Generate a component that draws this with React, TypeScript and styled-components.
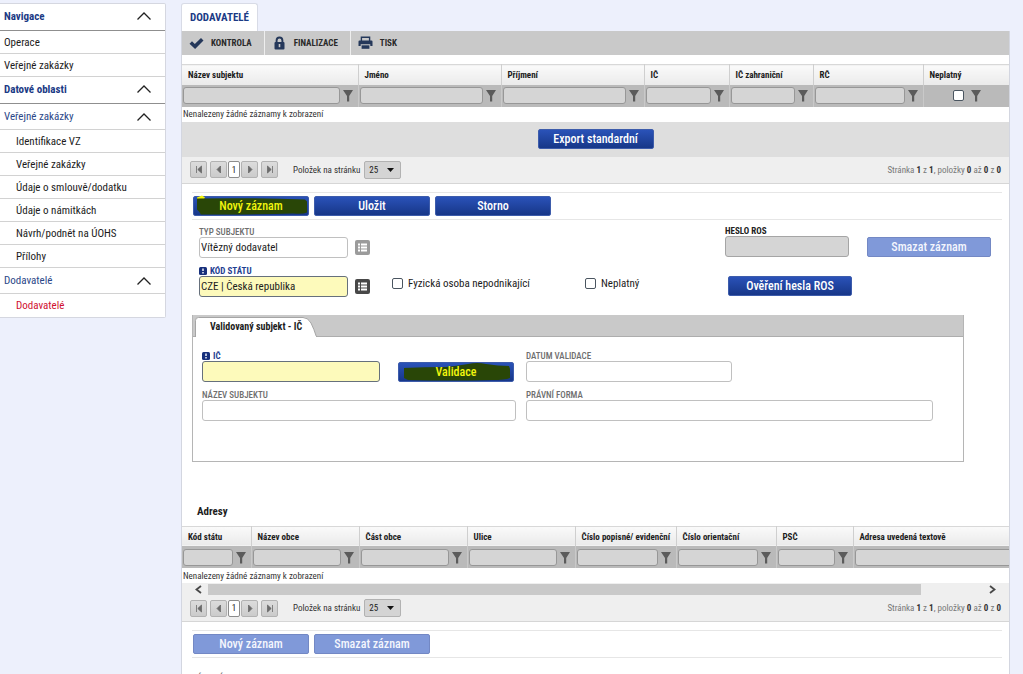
import React, { ReactNode } from "react";
import styled, { createGlobalStyle, css } from "styled-components";

const Global = createGlobalStyle`
  * { box-sizing: border-box; }
  body {
    margin: 0;
    background: #edf0fc;
    color: #1c1c1c;
    font-family: "Roboto Condensed", "Liberation Sans Narrow", Roboto, sans-serif;
    font-size: 11px;
  }
  button, input, select { font: inherit; margin: 0; }
`;

const Page = styled.div`
  display: flex;
  align-items: flex-start;
  gap: 15px;
  height: 100vh;
  padding: 3px 13px 0 0;
  overflow: hidden;
`;

/* ---------- sidebar ---------- */

const Sidebar = styled.nav`
  flex: 0 0 166px;
  background: #fff;
  border: 1px solid #d5d7e0;
  border-left: 0;
  border-radius: 0 2px 2px 0;
`;

type NavKind = "title" | "link" | "group" | "child";

const navKinds = {
  title: css`
    height: 27px;
    padding-bottom: 2px;
    color: #1b3a85;
    font-weight: 700;
    border-bottom-color: #8f8f8f;
  `,
  link: css`
    height: 23px;
  `,
  group: css`
    height: 26px;
    color: #2b4788;
  `,
  child: css`
    height: 23px;
    padding-left: 16px;
  `,
};

const NavItem = styled.a<{ $kind: NavKind; $active?: boolean }>`
  display: flex;
  align-items: center;
  justify-content: space-between;
  padding: 0 13px 0 4px;
  color: #1c1c1c;
  text-decoration: none;
  border-bottom: 1px solid #d2d2d2;
  ${(p) => navKinds[p.$kind]}
  ${(p) => p.$active && "color: #d01030;"}
  &:last-child { border-bottom: 0; }
`;

const navItems: { kind: NavKind; text: string; active?: boolean }[] = [
  { kind: "title", text: "Navigace" },
  { kind: "link", text: "Operace" },
  { kind: "link", text: "Veřejné zakázky" },
  { kind: "title", text: "Datové oblasti" },
  { kind: "group", text: "Veřejné zakázky" },
  { kind: "child", text: "Identifikace VZ" },
  { kind: "child", text: "Veřejné zakázky" },
  { kind: "child", text: "Údaje o smlouvě/dodatku" },
  { kind: "child", text: "Údaje o námitkách" },
  { kind: "child", text: "Návrh/podnět na ÚOHS" },
  { kind: "child", text: "Přílohy" },
  { kind: "group", text: "Dodavatelé" },
  { kind: "child", text: "Dodavatelé", active: true },
];

const Chevron = () => (
  <svg width="16" height="10" viewBox="0 0 16 10" fill="none" stroke="#222" strokeWidth="1.3">
    <path d="M1.5 8.5 8 2l6.5 6.5" />
  </svg>
);

/* ---------- main column ---------- */

const Main = styled.main`
  flex: 1;
  min-width: 0;
`;

const PageTab = styled.h1`
  display: inline-flex;
  align-items: center;
  height: 28px;
  margin: 0;
  padding: 0 8px;
  background: #fff;
  border: 1px solid #d8dbe6;
  border-bottom: 0;
  border-radius: 3px 3px 0 0;
  color: #1b3a85;
  font-size: 11px;
  font-weight: 700;
  vertical-align: top;
`;

const Sheet = styled.div`
  background: #fff;
  border: solid #d3d6e0;
  border-width: 0 1px;
  min-height: 700px;
`;

const Toolbar = styled.div`
  display: flex;
  height: 24px;
  margin-bottom: 9px;
  background: #c9c9c9;
`;

const Tool = styled.button`
  display: flex;
  align-items: center;
  gap: 7px;
  padding: 0 12px 0 7px;
  background: none;
  border: 0;
  border-right: 1px solid #eee;
  color: #2a2a2a;
  font-size: 9px;
  font-weight: 700;
  &:last-child { border-right: 0; }
`;

const CheckIcon = () => (
  <svg width="15" height="13" viewBox="0 0 15 13">
    <path d="M.5 6.800 3 4.300 5.800 6.900 12 1l2.500 2.500L6.100 12z" fill="#25385a" />
  </svg>
);
const LockIcon = () => (
  <svg width="15" height="14" viewBox="0 0 15 14">
    <path d="M4.600 6.500V4.400a2.900 2.900 0 0 1 5.800 0v2.100" fill="none" stroke="#25385a" strokeWidth="1.900" />
    <rect x="2.500" y="6" width="10" height="7.500" rx="1" fill="#25385a" />
    <path d="M7.500 8v3.200" stroke="#c9c9c9" strokeWidth="1.600" />
  </svg>
);
const PrintIcon = () => (
  <svg width="15" height="14" viewBox="0 0 15 14">
    <path d="M3.400 5V1.200h8.200V5" fill="none" stroke="#25385a" strokeWidth="1.400" />
    <path d="M1.500 4.500h12a1 1 0 0 1 1 1V10h-2.200V8.200H2.700V10H.5V5.500a1 1 0 0 1 1-1z" fill="#25385a" />
    <path d="M3.600 9.300h7.800v3.500H3.600z" fill="#25385a" />
  </svg>
);

/* ---------- grids ---------- */

const TableWrap = styled.div`
  overflow: hidden;
`;

const Table = styled.table<{ $min?: number }>`
  width: 100%;
  min-width: ${(p) => p.$min ?? 0}px;
  table-layout: fixed;
  border-collapse: collapse;
`;

const Col = styled.col<{ $w: number }>`
  width: ${(p) => p.$w}px;
`;

const HeadCell = styled.th`
  height: 20px;
  padding: 1px 4px 0 6px;
  background: linear-gradient(#fafafa, #eaeaea);
  border-top: 1px solid #d8d8d8;
  border-right: 1px solid #cfcfcf;
  color: #1c1c1c;
  font-size: 9px;
  font-weight: 700;
  line-height: 12px;
  text-align: left;
  white-space: nowrap;
`;

const FilterCell = styled.td`
  height: 22px;
  padding: 0 4px 0 1px;
  background: #bababa;
  border-right: 1px solid #c9c9c9;
`;

const FilterBox = styled.div<{ $center?: boolean }>`
  display: flex;
  align-items: center;
  justify-content: ${(p) => (p.$center ? "center" : "flex-start")};
  gap: ${(p) => (p.$center ? 6 : 2)}px;
  padding-left: ${(p) => (p.$center ? 5 : 0)}px;
`;

const FilterInput = styled.input`
  flex: 1;
  min-width: 0;
  height: 17px;
  padding: 0 4px;
  background: #d5d5d5;
  border: 1px solid #979797;
  border-radius: 3px;
`;

const Tick = styled.input`
  appearance: none;
  flex: none;
  width: 11px;
  height: 11px;
  background: #fff;
  border: 1px solid #4a5560;
  border-radius: 2px;
`;

const IconButton = styled.button`
  display: flex;
  padding: 0;
  background: none;
  border: 0;
`;

const EmptyCell = styled.td`
  height: 15px;
  padding: 0 1px;
  color: #333;
  font-size: 9px;
  line-height: 14px;
`;

const Funnel = () => (
  <svg width="12" height="13" viewBox="0 0 12 13">
    <path d="M1 1h10L7.200 7v5.500H5V7z" fill="#5b5b5b" />
  </svg>
);

type Column = { name: string; w: number; check?: boolean };

function DataGrid({ columns, min, label }: { columns: Column[]; min?: number; label: string }) {
  return (
    <TableWrap>
      <Table $min={min} aria-label={label}>
        <colgroup>
          {columns.map((c) => (
            <Col key={c.name} $w={c.w} />
          ))}
        </colgroup>
        <thead>
          <tr>
            {columns.map((c) => (
              <HeadCell key={c.name}>{c.name}</HeadCell>
            ))}
          </tr>
        </thead>
        <tbody>
          <tr>
            {columns.map((c) => (
              <FilterCell key={c.name}>
                <FilterBox $center={c.check}>
                  {c.check ? (
                    <Tick type="checkbox" aria-label={c.name} />
                  ) : (
                    <FilterInput aria-label={c.name} />
                  )}
                  <IconButton aria-label={"Filtr " + c.name}>
                    <Funnel />
                  </IconButton>
                </FilterBox>
              </FilterCell>
            ))}
          </tr>
          <tr>
            <EmptyCell colSpan={columns.length}>Nenalezeny žádné záznamy k zobrazení</EmptyCell>
          </tr>
        </tbody>
      </Table>
    </TableWrap>
  );
}

const supplierColumns: Column[] = [
  { name: "Název subjektu", w: 176 },
  { name: "Jméno", w: 143 },
  { name: "Příjmení", w: 143 },
  { name: "IČ", w: 85 },
  { name: "IČ zahraniční", w: 84 },
  { name: "RČ", w: 110 },
  { name: "Neplatný", w: 86, check: true },
];

const addressColumns: Column[] = [
  { name: "Kód státu", w: 69 },
  { name: "Název obce", w: 108 },
  { name: "Část obce", w: 108 },
  { name: "Ulice", w: 108 },
  { name: "Číslo popisné/ evidenční", w: 101 },
  { name: "Číslo orientační", w: 100 },
  { name: "PSČ", w: 77 },
  { name: "Adresa uvedená textově", w: 241 },
];

const ExportBar = styled.div`
  display: flex;
  align-items: center;
  justify-content: center;
  height: 35px;
  background: #dedede;
`;

/* ---------- pager ---------- */

const PagerBar = styled.div`
  display: flex;
  align-items: center;
  height: 27px;
  padding: 0 8px;
  background: #efefef;
  border-bottom: 1px solid #d6d6d6;
  color: #333;
  font-size: 9px;
`;

const PageButtons = styled.div`
  display: flex;
  gap: 3px;
  margin-right: 15px;
`;

const PageStep = styled.div`
  display: flex;
  gap: 1px;
`;

const PageButton = styled.button<{ $current?: boolean }>`
  display: flex;
  align-items: center;
  justify-content: center;
  width: ${(p) => (p.$current ? 12 : 17)}px;
  height: 17px;
  padding: 0;
  background: ${(p) => (p.$current ? "#fff" : "linear-gradient(#dcdcdc, #cbcbcb)")};
  border: 1px solid ${(p) => (p.$current ? "#8c8c8c" : "#b2b2b2")};
  border-radius: 2px;
  color: #222;
`;

const SizeLabel = styled.label`
  display: flex;
  align-items: center;
  gap: 4px;
`;

const SelectWrap = styled.span`
  position: relative;
  display: inline-flex;
`;

const SizeSelect = styled.select`
  appearance: none;
  width: 37px;
  height: 18px;
  padding: 0 4px;
  background: #d4d4d4;
  border: 1px solid #b2b2b2;
  border-radius: 2px;
  color: #222;
`;

const SelectArrow = styled.svg`
  position: absolute;
  top: 7px;
  right: 7px;
  pointer-events: none;
`;

const Summary = styled.span`
  margin-left: auto;
  color: #777;
  b { color: #333; }
`;

const arrows = {
  first: "M2.500 1v7M7.500 1v7L3.800 4.500z",
  prev: "M6.500 1v7L3 4.500z",
  next: "M3.500 1v7L7 4.500z",
  last: "M7.500 1v7M2.500 1v7l3.700-3.500z",
};

function Arrow({ kind }: { kind: keyof typeof arrows }) {
  return (
    <svg width="10" height="9" viewBox="0 0 10 9" fill="#6a6a6a" stroke="#6a6a6a" strokeWidth="0.8">
      <path d={arrows[kind]} />
    </svg>
  );
}

function Pager() {
  return (
    <PagerBar>
      <PageButtons>
        <PageButton aria-label="První"><Arrow kind="first" /></PageButton>
        <PageStep>
          <PageButton aria-label="Předchozí"><Arrow kind="prev" /></PageButton>
          <PageButton $current>1</PageButton>
          <PageButton aria-label="Další"><Arrow kind="next" /></PageButton>
        </PageStep>
        <PageButton aria-label="Poslední"><Arrow kind="last" /></PageButton>
      </PageButtons>
      <SizeLabel>
        Položek na stránku
        <SelectWrap>
          <SizeSelect defaultValue="25">
            <option>25</option>
            <option>50</option>
          </SizeSelect>
          <SelectArrow width="7" height="4" viewBox="0 0 7 4">
            <path d="M0 0h7L3.500 4z" fill="#111" />
          </SelectArrow>
        </SelectWrap>
      </SizeLabel>
      <Summary>
        Stránka <b>1</b> z <b>1</b>, položky <b>0</b> až <b>0</b> z <b>0</b>
      </Summary>
    </PagerBar>
  );
}

/* ---------- buttons ---------- */

const Action = styled.button<{ $wide?: boolean }>`
  position: relative;
  flex: none;
  width: ${(p) => (p.$wide ? 124 : 116)}px;
  height: 20px;
  padding: 0;
  background: linear-gradient(#2a52b8, #173788);
  border: 1px solid #3d5cab;
  border-radius: 2px;
  color: #fff;
  font-size: 12px;
  font-weight: 500;
  line-height: 16px;
  white-space: nowrap;
  &:disabled {
    background: #8099d9;
    border-color: #7388c4;
    color: #f4f6fd;
  }
`;

const Marker = styled.svg`
  position: absolute;
  top: -3px;
  left: 0;
`;

const MarkedText = styled.span`
  position: relative;
  color: #f2f60e;
`;

const ButtonRow = styled.div`
  display: flex;
  gap: 5px;
  margin: 8px 7px 0 10px;
  padding: 3px 1px;
  border: solid #e6e6e6;
  border-width: 1px 0;
`;

/* ---------- form ---------- */

const Form = styled.div`
  display: flex;
  flex-direction: column;
  gap: 8px;
  padding: 6px 18px 0 17px;
`;

const FormRow = styled.div`
  display: flex;
  align-items: flex-end;
`;

const Field = styled.label<{ $w: number }>`
  display: flex;
  flex-direction: column;
  width: ${(p) => p.$w}px;
`;

const Caption = styled.span<{ $tone?: "required" | "dark" }>`
  display: flex;
  align-items: center;
  gap: 3px;
  height: 10px;
  color: ${(p) => (p.$tone === "required" ? "#1f3f92" : p.$tone === "dark" ? "#222" : "#6e6e6e")};
  font-size: 9px;
  font-weight: ${(p) => (p.$tone ? 700 : 500)};
  line-height: 10px;
  white-space: nowrap;
`;

const fieldTones = {
  plain: css`background: #fff; border-color: #c0c0c0;`,
  required: css`background: #fdfabb; border-color: #66707c;`,
  disabled: css`background: #d5d5d5; border-color: #a5a5a5;`,
};

const TextInput = styled.input<{ $tone?: keyof typeof fieldTones }>`
  width: 100%;
  height: 21px;
  padding: 0 1px;
  border: 1px solid;
  border-radius: 3px;
  color: #1c1c1c;
  ${(p) => fieldTones[p.$tone ?? "plain"]}
`;

const ListButton = styled.button<{ $muted?: boolean }>`
  display: flex;
  margin: 0 0 3px 7px;
  padding: 0;
  background: ${(p) => (p.$muted ? "#9b9b9b" : "#484848")};
  border: 0;
  border-radius: 2px;
`;

const ListIcon = () => (
  <svg width="15" height="15" viewBox="0 0 15 15" fill="#fff">
    <path d="M3 3.500h2v2H3zM6 3.500h6v2H6zM3 6.500h2v2H3zM6 6.500h6v2H6zM3 9.500h2v2H3zM6 9.500h6v2H6z" />
  </svg>
);

const RequiredIcon = () => (
  <svg width="8" height="8" viewBox="0 0 8 8">
    <rect width="8" height="8" rx="1.500" fill="#17307c" />
    <path d="M3.300 1.500h1.400v2.600H3.300zM3.300 5h1.400v1.400H3.300z" fill="#fff" />
  </svg>
);

const CheckField = styled.label<{ $w: number }>`
  display: flex;
  align-items: center;
  gap: 5px;
  width: ${(p) => p.$w}px;
  height: 27px;
  white-space: nowrap;
`;

const Checks = styled.div`
  display: flex;
  margin-left: 22px;
`;

const RightGroup = styled.div<{ $end?: boolean }>`
  display: flex;
  align-items: flex-end;
  gap: 18px;
  width: 266px;
  margin-left: auto;
  padding: 0 0 1px ${(p) => (p.$end ? 3 : 0)}px;
`;

/* ---------- validated subject panel ---------- */

const Panel = styled.section`
  margin: 18px 45px 0 10px;
  min-height: 147px;
  border: 1px solid #b5b5b5;
  border-top: 0;
`;

const TabStrip = styled.div`
  display: flex;
  align-items: flex-end;
  height: 22px;
  padding-left: 2px;
  background: #c9c9c9;
  border-bottom: 1px solid #adadad;
`;

const PanelTab = styled.h2`
  position: relative;
  display: flex;
  align-items: center;
  width: 123px;
  height: 20px;
  margin: 0 0 -1px;
  padding: 0 0 0 15px;
  font-size: 10px;
  font-weight: 700;
  span { position: relative; white-space: nowrap; }
`;

const TabShape = styled.svg`
  position: absolute;
  inset: 0;
`;

const PanelGrid = styled.div`
  display: grid;
  grid-template-columns: 314px 407px;
  column-gap: 10px;
  row-gap: 8px;
  padding: 14px 9px 0;
`;

const Split = styled.div`
  display: flex;
  align-items: flex-end;
  justify-content: space-between;
  padding-right: 2px;
`;

const SectionTitle = styled.h2`
  margin: 42px 0 7px 15px;
  font-size: 11px;
  line-height: 15px;
  font-weight: 700;
`;

const ScrollBar = styled.div`
  display: flex;
  align-items: center;
  gap: 5px;
  height: 12px;
  padding: 0 12px;
  background: #efefef;
`;

const ScrollTrack = styled.div`
  flex: 1;
  height: 11px;
`;

const ScrollThumb = styled.div`
  width: 92%;
  height: 100%;
  background: #c9c9c9;
`;

const ScrollArrow = ({ d }: { d: string }) => (
  <svg width="9" height="9" viewBox="0 0 9 9" fill="none" stroke="#484848" strokeWidth="1.800">
    <path d={d} />
  </svg>
);

const NextForm = styled.div`
  padding: 15px 10px;
`;

function Labelled({
  w, text, tone, input, value,
}: {
  w: number;
  text: string;
  tone?: "required" | "dark";
  input?: keyof typeof fieldTones;
  value?: string;
}) {
  const icon: ReactNode = tone === "required" ? <RequiredIcon /> : null;
  return (
    <Field $w={w}>
      <Caption $tone={tone}>{icon}{text}</Caption>
      <TextInput $tone={input} defaultValue={value} />
    </Field>
  );
}

export default function App() {
  return (
    <Page>
      <Global />
      <Sidebar>
        {navItems.map((n, i) => (
          <NavItem key={i} href="#" $kind={n.kind} $active={n.active}>
            {n.text}
            {(n.kind === "title" || n.kind === "group") && <Chevron />}
          </NavItem>
        ))}
      </Sidebar>
      <Main>
        <PageTab>DODAVATELÉ</PageTab>
        <Sheet>
          <Toolbar>
            <Tool><CheckIcon />KONTROLA</Tool>
            <Tool><LockIcon />FINALIZACE</Tool>
            <Tool><PrintIcon />TISK</Tool>
          </Toolbar>
          <DataGrid columns={supplierColumns} label="Dodavatelé" />
          <ExportBar><Action>Export standardní</Action></ExportBar>
          <Pager />

          <ButtonRow>
            <Action>
              <Marker width="115" height="23" viewBox="0 0 115 23">
                <path d="M3 3.500 8 1.500l3 2-2 3H3z" fill="#f4f60c" />
                <path d="M3 4.500q54-1 108 1l2 2v11q-4 2-14 1-40 1-92 1l-2-3-2-2z" fill="#294607" />
              </Marker>
              <MarkedText>Nový záznam</MarkedText>
            </Action>
            <Action>Uložit</Action>
            <Action>Storno</Action>
          </ButtonRow>

          <Form>
            <FormRow>
              <Labelled w={149} text="TYP SUBJEKTU" value="Vítězný dodavatel" />
              <ListButton $muted aria-label="Vybrat typ subjektu"><ListIcon /></ListButton>
              <RightGroup>
                <Labelled w={124} text="HESLO ROS" tone="dark" input="disabled" />
                <Action $wide disabled>Smazat záznam</Action>
              </RightGroup>
            </FormRow>
            <FormRow>
              <Labelled w={149} text="KÓD STÁTU" tone="required" input="required" value="CZE | Česká republika" />
              <ListButton aria-label="Vybrat stát"><ListIcon /></ListButton>
              <Checks>
                <CheckField $w={193}><Tick type="checkbox" />Fyzická osoba nepodnikající</CheckField>
                <CheckField $w={60}><Tick type="checkbox" />Neplatný</CheckField>
              </Checks>
              <RightGroup $end><Action $wide>Ověření hesla ROS</Action></RightGroup>
            </FormRow>
          </Form>

          <Panel>
            <TabStrip>
              <PanelTab>
                <TabShape width="123" height="20" viewBox="0 0 123 20">
                  <path d="M.5 20V3.500a3 3 0 0 1 3-3H108q5 0 8 5.500 3 6 5.500 14z" fill="#fff" stroke="#a5a5a5" />
                  <path d="M1 19.500h120" stroke="#fff" />
                </TabShape>
                <span>Validovaný subjekt - IČ</span>
              </PanelTab>
            </TabStrip>
            <PanelGrid>
              <Split>
                <Labelled w={178} text="IČ" tone="required" input="required" />
                <Action>
                  <Marker width="115" height="23" viewBox="0 0 115 23">
                    <path d="M5 8q20-1 42-1 10-1 22-3 9-2 18 0 12 2 23 2l1 3v9q-5 2-18 2-40 1-84 0l-4-2z" fill="#294607" />
                  </Marker>
                  <MarkedText>Validace</MarkedText>
                </Action>
              </Split>
              <Labelled w={206} text="DATUM VALIDACE" />
              <Labelled w={314} text="NÁZEV SUBJEKTU" />
              <Labelled w={407} text="PRÁVNÍ FORMA" />
            </PanelGrid>
          </Panel>

          <SectionTitle>Adresy</SectionTitle>
          <DataGrid columns={addressColumns} min={912} label="Adresy" />
          <ScrollBar>
            <ScrollArrow d="M7 1 2.500 4.500 7 8" />
            <ScrollTrack><ScrollThumb /></ScrollTrack>
            <ScrollArrow d="M2 1l4.500 3.500L2 8" />
          </ScrollBar>
          <Pager />
          <ButtonRow>
            <Action disabled>Nový záznam</Action>
            <Action disabled>Smazat záznam</Action>
          </ButtonRow>
          <NextForm>
            <Labelled w={150} text="KÓD STÁTU" />
          </NextForm>
        </Sheet>
      </Main>
    </Page>
  );
}
